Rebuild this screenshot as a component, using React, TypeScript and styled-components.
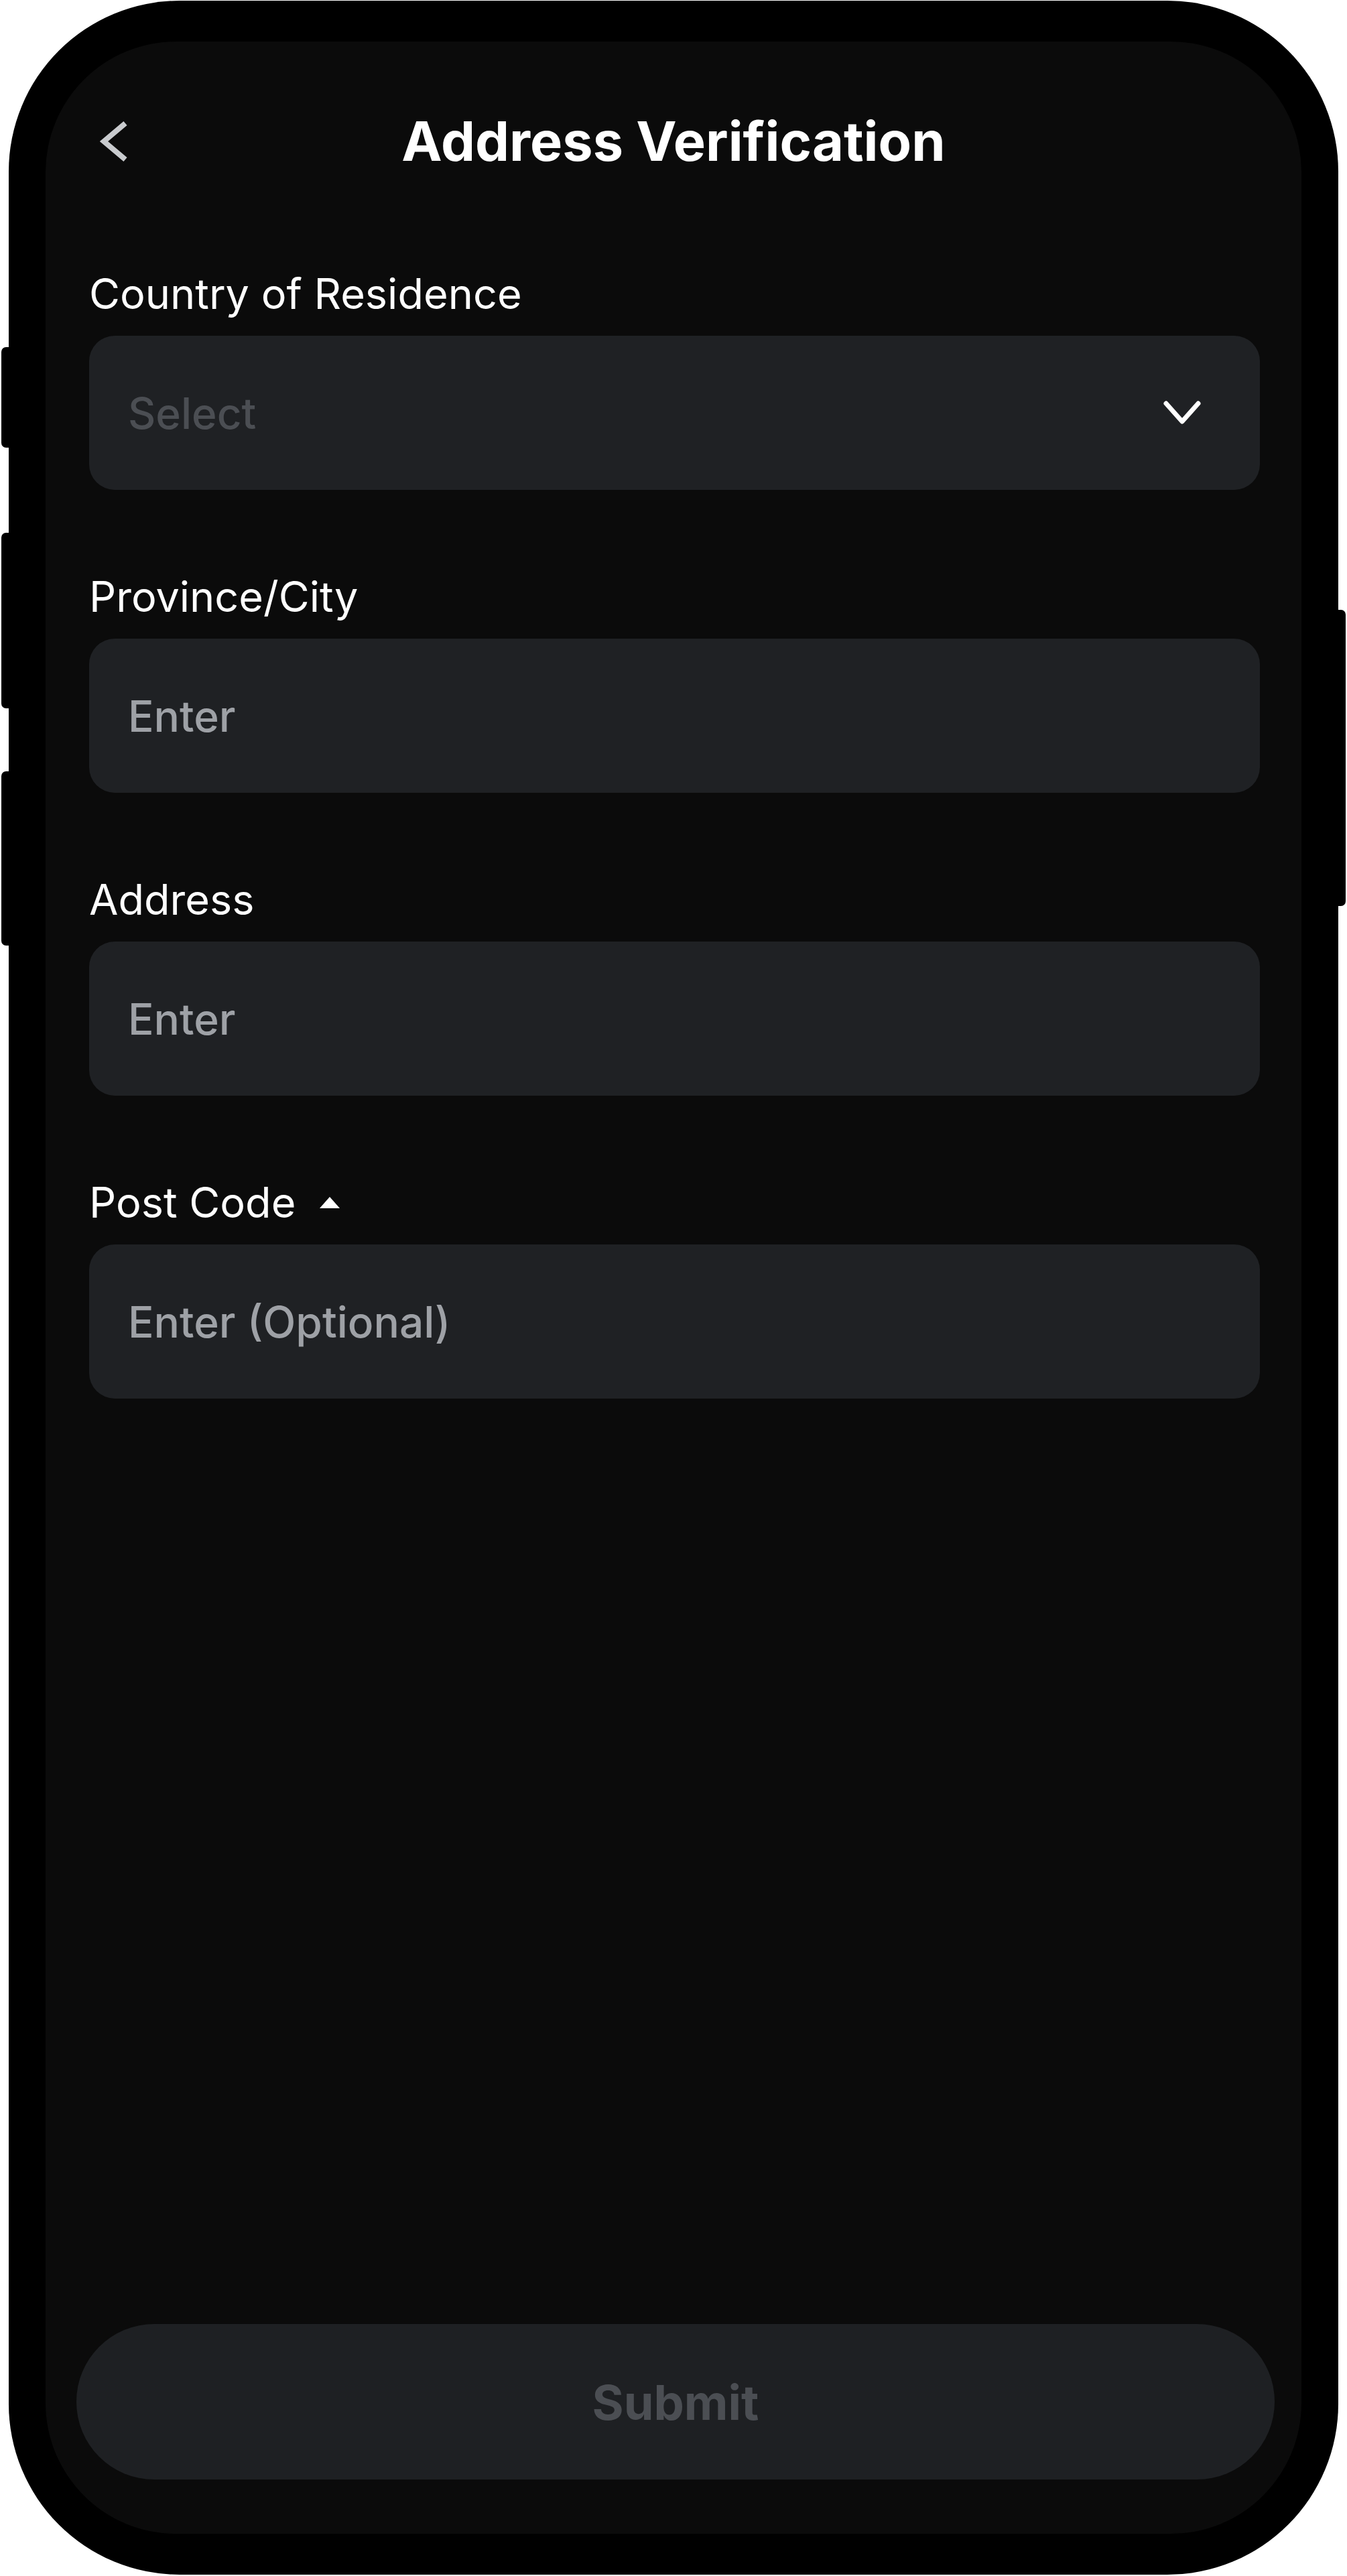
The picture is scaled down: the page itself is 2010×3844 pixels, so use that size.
import React from "react";
import styled, { createGlobalStyle } from "styled-components";

const GlobalStyle = createGlobalStyle`
    html, body {
        margin: 0;
        padding: 0;
        background: #ffffff;
    }
    * {
        box-sizing: border-box;
    }
`

const Page = styled.div`
    width: 2010px;
    height: 3844px;
    padding: 1px 0 0 13px;
    background: #ffffff;
    font-family: "Inter", "Roboto", sans-serif;
    overflow: hidden;
`

const PhoneBody = styled.div`
    position: relative;
    width: 1984px;
    height: 3841px;
    padding: 61px 55px 61px 55px;
    background: #000000;
    border-radius: 255px;
`

const SideKey = styled.div<{ $side: "left" | "right"; $top: number; $height: number }>`
    position: absolute;
    top: ${(p) => p.$top}px;
    ${(p) => (p.$side === "left" ? "left: -11px;" : "right: -11px;")}
    width: 12px;
    height: ${(p) => p.$height}px;
    background: #000000;
    border-radius: ${(p) => (p.$side === "left" ? "7px 0 0 7px" : "0 7px 7px 0")};
`

const Screen = styled.div`
    width: 100%;
    height: 100%;
    display: flex;
    flex-direction: column;
    background: #0b0b0b;
    border-radius: 195px;
    overflow: hidden;
`

const Header = styled.header`
    display: grid;
    grid-template-columns: 1fr auto 1fr;
    align-items: center;
    height: 96px;
    margin-top: 101px;
`

const BackButton = styled.button`
    justify-self: start;
    display: flex;
    align-items: center;
    margin-left: 80px;
    padding: 0;
    border: 0;
    background: transparent;
    cursor: pointer;
`

const Title = styled.h1`
    margin: 0;
    font-size: 81px;
    line-height: 96px;
    font-weight: 700;
    color: #ffffff;
`

const Form = styled.div`
    display: flex;
    flex-direction: column;
    gap: 121px;
    margin-top: 141px;
    padding: 0 62px 0 65px;
`

const Field = styled.div`
    display: flex;
    flex-direction: column;
    gap: 24px;
`

const Label = styled.div`
    display: flex;
    align-items: center;
    gap: 36px;
    font-size: 63px;
    line-height: 77px;
    font-weight: 400;
    color: #ffffff;
`

const UpMark = styled.span`
    width: 0;
    height: 0;
    border-left: 15px solid transparent;
    border-right: 15px solid transparent;
    border-bottom: 17px solid #ffffff;
`

const InputBox = styled.div`
    display: flex;
    align-items: center;
    justify-content: space-between;
    height: 230px;
    padding: 0 88px 0 58px;
    background: #1f2124;
    border-radius: 38px;
`

const Placeholder = styled.span<{ $dim?: boolean }>`
    font-size: 64px;
    font-weight: 500;
    color: ${(p) => (p.$dim ? "#4b4e53" : "#9ea1a6")};
`

const Spacer = styled.div`
    flex: 1;
`

const SubmitButton = styled.button`
    display: flex;
    align-items: center;
    justify-content: center;
    height: 232px;
    margin: 0 40px 81px 46px;
    border: 0;
    border-radius: 116px;
    background: #1e2023;
    font-family: "Inter", "Roboto", sans-serif;
    font-size: 72px;
    font-weight: 700;
    color: #4b4e53;
`

const fields = [
    { label: "Country of Residence", placeholder: "Select", select: true },
    { label: "Province/City", placeholder: "Enter" },
    { label: "Address", placeholder: "Enter" },
    { label: "Post Code", placeholder: "Enter (Optional)", mark: true },
]

function ChevronLeft() {
    return (
        <svg width="44" height="64" viewBox="0 0 44 64" fill="none">
            <polyline points="39,5 7,32 39,59" stroke="#c9cbce" strokeWidth="8" strokeLinejoin="miter" />
        </svg>
    )
}

function ChevronDown() {
    return (
        <svg width="56" height="38" viewBox="0 0 56 38" fill="none">
            <polyline points="4,5 28,32 52,5" stroke="#ffffff" strokeWidth="7" strokeLinejoin="round" strokeLinecap="round" />
        </svg>
    )
}

export default function App() {
    return (
        <>
            <GlobalStyle />
            <Page>
                <PhoneBody>
                    <SideKey $side="left" $top={517} $height={150} />
                    <SideKey $side="left" $top={794} $height={262} />
                    <SideKey $side="left" $top={1150} $height={260} />
                    <SideKey $side="right" $top={909} $height={442} />
                    <Screen>
                        <Header>
                            <BackButton aria-label="Back">
                                <ChevronLeft />
                            </BackButton>
                            <Title>Address Verification</Title>
                            <div />
                        </Header>
                        <Form>
                            {fields.map((f) => (
                                <Field key={f.label}>
                                    <Label>
                                        {f.label}
                                        {f.mark && <UpMark />}
                                    </Label>
                                    <InputBox>
                                        <Placeholder $dim={f.select}>{f.placeholder}</Placeholder>
                                        {f.select && <ChevronDown />}
                                    </InputBox>
                                </Field>
                            ))}
                        </Form>
                        <Spacer />
                        <SubmitButton>Submit</SubmitButton>
                    </Screen>
                </PhoneBody>
            </Page>
        </>
    )
}
